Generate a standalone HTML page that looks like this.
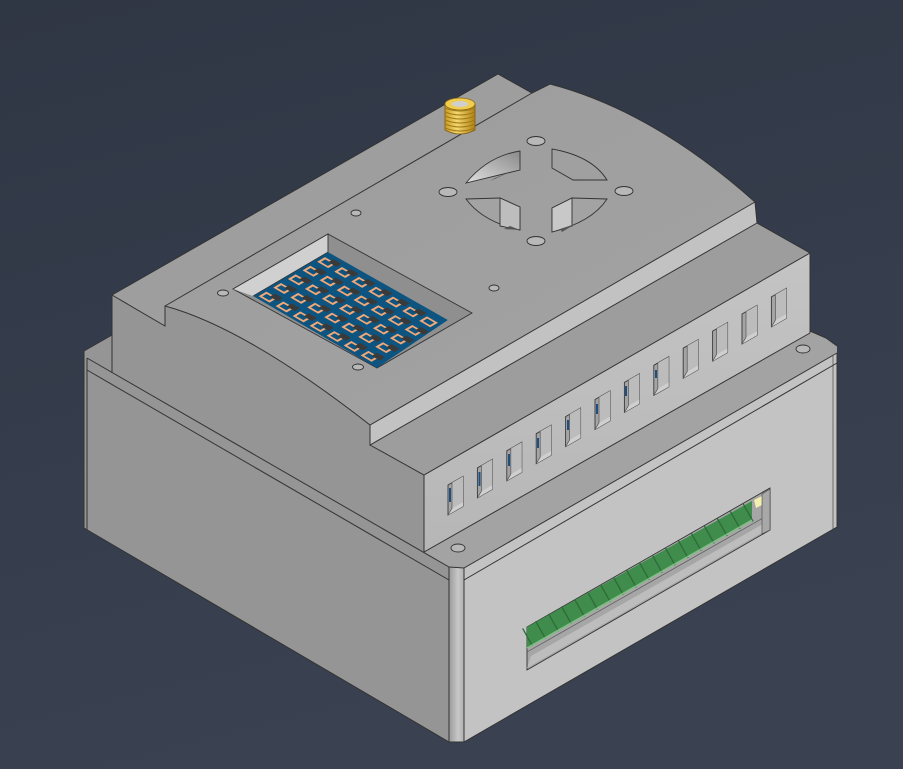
<!DOCTYPE html>
<html><head><meta charset="utf-8"><style>
html,body{margin:0;padding:0;width:903px;height:769px;overflow:hidden;background:#333a48}
svg{display:block}
</style></head><body>
<svg width="903" height="769" viewBox="0 0 903 769" xmlns="http://www.w3.org/2000/svg">
<defs>
<linearGradient id="bg" x1="0" y1="0" x2="0.3" y2="1">
<stop offset="0" stop-color="#2f3644"/><stop offset="1" stop-color="#3a4252"/></linearGradient>
<linearGradient id="band" x1="0" y1="0" x2="1" y2="0">
<stop offset="0" stop-color="#9a9a9a"/><stop offset="0.6" stop-color="#c8c8c8"/><stop offset="1" stop-color="#b0b0b0"/></linearGradient>
<linearGradient id="dome" x1="0" y1="0" x2="1" y2="1">
<stop offset="0" stop-color="#9c9c9c"/><stop offset="1" stop-color="#a3a3a3"/></linearGradient>
<linearGradient id="pet1" x1="0" y1="1" x2="1" y2="0">
<stop offset="0" stop-color="#e0e0e0"/><stop offset="1" stop-color="#8a8a8a"/></linearGradient>
<linearGradient id="gold" x1="0" y1="0" x2="1" y2="0">
<stop offset="0" stop-color="#c89a20"/><stop offset="0.4" stop-color="#f5d870"/><stop offset="1" stop-color="#b08010"/></linearGradient>
<linearGradient id="face2" x1="0" y1="0" x2="0" y2="1">
<stop offset="0" stop-color="#c4c4c4"/><stop offset="1" stop-color="#b6b6b6"/></linearGradient>
<g id="slot">
<path d="M0,0 L15,-8.6 L15,21.4 L0,30 Z" fill="#a4a4a4" stroke="#3a3a3a" stroke-width="0.9"/>
<path d="M4,-2.3 L15,-8.6 L15,17 L4,23.3 Z" fill="#bcbcbc"/>
<path d="M0,30 L4,23.3 L15,17 L15,21.4 Z" fill="#cfcfcf"/>
<path d="M4,-2.3 L4,23.3 L0,30" fill="none" stroke="#555" stroke-width="0.7"/>
</g>
<clipPath id="win"><path d="M253,296 L328,252 L448,320 L377,368 Z"/></clipPath>
</defs>
<rect width="903" height="769" fill="url(#bg)"/>

<!-- left face (whole) -->
<path d="M84,351 L112,335 L112,295 L165,306 Q246,328 370,425 L370,445 L424,475 L424,552 L449,567 L449,742 L84,528 Z" fill="#959595"/>
<!-- lower right face -->
<path d="M464,568 L837,353 L837,527 L464,742 Z" fill="#c3c3c3"/>
<rect x="449" y="567" width="15" height="175" fill="url(#band)"/>
<!-- right ledge top -->
<path d="M424,552 L810,331 L826,338 L837,346 L837,353 L464,568 L449,567 Z" fill="#a3a3a3"/>
<!-- upper right face -->
<path d="M424,475 L810,253 L810,333 L424,552 Z" fill="url(#face2)"/>
<!-- step top -->
<path d="M370,445 L757,223 L810,253 L424,475 Z" fill="#9d9d9d"/>
<!-- step front band -->
<path d="M370,425 L755,202 L757,223 L370,445 Z" fill="#c2c2c2"/>
<!-- dome top -->
<path d="M112,295 L498,74 L532,93 L550,84 Q653,111 755,202 L370,425 Q246,328 165,306 L165,326 Z" fill="url(#dome)"/>

<!-- edges -->
<g fill="none" stroke="#333" stroke-width="1">
<path d="M112,295 L498,74 L532,93 L550,84 Q653,111 755,202 L757,223 L810,253 L810,333"/>
<path d="M165,306 L532,93"/>
<path d="M112,295 L165,326 L165,306 Q246,328 370,425 L755,202"/>
<path d="M370,425 L370,445 L757,223"/>
<path d="M370,445 L424,475 L810,253"/>
<path d="M424,475 L424,552 L810,333"/>
<path d="M112,295 L112,373"/>
<path d="M84,351 L112,335"/>
<path d="M84,351 L84,528 L449,742 L464,742 L837,527 L837,353"/>
<path d="M87,358 L449,567 L464,568 L837,353"/>
<path d="M87,358 L87,530"/>
<path d="M87,370 L449,580"/>
<path d="M464,580 L837,363"/>
<path d="M449,567 L449,742 M464,568 L464,742"/>
<path d="M833,356 L833,529" stroke-width="0.6"/>
<path d="M810,331 L826,338 L837,346"/>
</g>

<!-- screw holes -->
<g stroke="#333" stroke-width="0.9" fill="#b8b8b8">
<ellipse cx="458" cy="548" rx="7" ry="4"/>
<ellipse cx="803" cy="349" rx="7" ry="4"/>
<ellipse cx="536" cy="141" rx="9" ry="4.5"/>
<ellipse cx="448" cy="192" rx="9" ry="4.5"/>
<ellipse cx="624" cy="191" rx="9" ry="4.5"/>
<ellipse cx="536" cy="241" rx="9" ry="4.5"/>
<ellipse cx="494" cy="288" rx="5" ry="3"/>
<ellipse cx="356" cy="213" rx="5" ry="3"/>
<ellipse cx="223" cy="293" rx="5.5" ry="3"/>
<ellipse cx="358" cy="367" rx="5.5" ry="3"/>
</g>

<!-- fan grill -->
<g stroke="#333" stroke-width="0.9">
<path d="M466,183 Q488,156 520,151 L520,170 Z" fill="url(#pet1)"/>
<path d="M552,149 Q592,156 607,180 L573,180 L552,168 Z" fill="#a0a0a0"/>
<path d="M466,199 L500,198 L520,207 L520,230 Q483,222 466,199 Z" fill="#a3a3a3"/>
<path d="M500,198 L520,207 L520,230 L500,226 Z" fill="#bdbdbd"/>
<path d="M607,199 L572,198 L552,208 L552,232 Q592,222 607,199 Z" fill="#a3a3a3"/>
<path d="M572,198 L552,208 L552,232 L572,226 Z" fill="#c8c8c8"/>
<path d="M510,226 L520,230 L504,229 Z" fill="#555" stroke="none"/>
<path d="M560,229 L575,224 L562,232 Z" fill="#555" stroke="none"/>
<path d="M495,178 L510,172 L490,181 Z" fill="#555" stroke="none"/>
</g>

<!-- PCB window -->
<path d="M233,289 L328,234 L472,313 L377,368 Z" fill="#8f8f8f" stroke="#333" stroke-width="0.9"/>
<path d="M233,289 L328,234 L328,252 L253,296 Z" fill="#d0d0d0"/>
<g clip-path="url(#win)">
<path d="M253,296 L328,252 L448,320 L377,368 Z" fill="#0d5580"/>
<g transform="matrix(1,0.58,0.862,-0.507,253,296)">
<g fill="none" stroke="#f0a878" stroke-width="2">
<rect x="4" y="4" width="9" height="7"/><rect x="21" y="4" width="9" height="7"/><rect x="38" y="4" width="9" height="7"/><rect x="55" y="4" width="9" height="7"/><rect x="72" y="4" width="9" height="7"/><rect x="89" y="4" width="9" height="7"/><rect x="106" y="4" width="9" height="7"/>
<rect x="4" y="21" width="9" height="7"/><rect x="21" y="21" width="9" height="7"/><rect x="38" y="21" width="9" height="7"/><rect x="55" y="21" width="9" height="7"/><rect x="72" y="21" width="9" height="7"/><rect x="89" y="21" width="9" height="7"/><rect x="106" y="21" width="9" height="7"/>
<rect x="4" y="38" width="9" height="7"/><rect x="21" y="38" width="9" height="7"/><rect x="38" y="38" width="9" height="7"/><rect x="55" y="38" width="9" height="7"/><rect x="72" y="38" width="9" height="7"/><rect x="89" y="38" width="9" height="7"/><rect x="106" y="38" width="9" height="7"/>
<rect x="4" y="55" width="9" height="7"/><rect x="21" y="55" width="9" height="7"/><rect x="38" y="55" width="9" height="7"/><rect x="55" y="55" width="9" height="7"/><rect x="72" y="55" width="9" height="7"/><rect x="89" y="55" width="9" height="7"/><rect x="106" y="55" width="9" height="7"/>
<rect x="4" y="72" width="9" height="7"/><rect x="21" y="72" width="9" height="7"/><rect x="38" y="72" width="9" height="7"/><rect x="55" y="72" width="9" height="7"/><rect x="72" y="72" width="9" height="7"/><rect x="89" y="72" width="9" height="7"/><rect x="106" y="72" width="9" height="7"/>
</g>
<g fill="#3a3a3a">
<rect x="9" y="9" width="8" height="6"/><rect x="26" y="9" width="8" height="6"/><rect x="43" y="9" width="8" height="6"/><rect x="60" y="9" width="8" height="6"/><rect x="77" y="9" width="8" height="6"/><rect x="94" y="9" width="8" height="6"/><rect x="111" y="9" width="8" height="6"/>
<rect x="9" y="26" width="8" height="6"/><rect x="26" y="26" width="8" height="6"/><rect x="43" y="26" width="8" height="6"/><rect x="60" y="26" width="8" height="6"/><rect x="77" y="26" width="8" height="6"/><rect x="94" y="26" width="8" height="6"/><rect x="111" y="26" width="8" height="6"/>
<rect x="9" y="43" width="8" height="6"/><rect x="26" y="43" width="8" height="6"/><rect x="43" y="43" width="8" height="6"/><rect x="60" y="43" width="8" height="6"/><rect x="77" y="43" width="8" height="6"/><rect x="94" y="43" width="8" height="6"/><rect x="111" y="43" width="8" height="6"/>
<rect x="9" y="60" width="8" height="6"/><rect x="26" y="60" width="8" height="6"/><rect x="43" y="60" width="8" height="6"/><rect x="60" y="60" width="8" height="6"/><rect x="77" y="60" width="8" height="6"/><rect x="94" y="60" width="8" height="6"/><rect x="111" y="60" width="8" height="6"/>
<rect x="9" y="77" width="8" height="6"/><rect x="26" y="77" width="8" height="6"/><rect x="43" y="77" width="8" height="6"/><rect x="60" y="77" width="8" height="6"/><rect x="77" y="77" width="8" height="6"/><rect x="94" y="77" width="8" height="6"/>
</g>
</g>
</g>
<path d="M253,296 L328,252" stroke="#333" stroke-width="0.7" fill="none"/>
<path d="M233,289 L328,234 L328,252" stroke="#333" stroke-width="0.9" fill="none"/>

<!-- antenna -->
<g>
<path d="M445,104 L445,130 Q460,138 475,130 L475,104 Z" fill="url(#gold)" stroke="#7a5a10" stroke-width="0.8"/>
<g stroke="#a07818" stroke-width="1" fill="none">
<path d="M445,108 Q460,114 475,108"/><path d="M445,112 Q460,118 475,112"/><path d="M445,116 Q460,122 475,116"/><path d="M445,120 Q460,126 475,120"/><path d="M445,124 Q460,130 475,124"/><path d="M445,128 Q460,134 475,128"/>
</g>
<ellipse cx="460" cy="104" rx="15" ry="6" fill="#f0cc50" stroke="#8a6a10" stroke-width="0.8"/>
<ellipse cx="460" cy="104" rx="8" ry="3" fill="#cfcfcf"/>
</g>

<!-- slots -->
<use href="#slot" transform="translate(448,485)"/>
<use href="#slot" transform="translate(477.4,467.9)"/>
<use href="#slot" transform="translate(506.8,450.8)"/>
<use href="#slot" transform="translate(536.2,433.7)"/>
<use href="#slot" transform="translate(565.6,416.6)"/>
<use href="#slot" transform="translate(595,399.5)"/>
<use href="#slot" transform="translate(624.4,382.4)"/>
<use href="#slot" transform="translate(653.8,365.3)"/>
<use href="#slot" transform="translate(683.2,348.2)"/>
<use href="#slot" transform="translate(712.6,331.1)"/>
<use href="#slot" transform="translate(742,314)"/>
<use href="#slot" transform="translate(771.4,296.9)"/>
<g fill="#1f4f80">
<rect x="449" y="488" width="2" height="14"/><rect x="478.5" y="472" width="2" height="14"/><rect x="508" y="454" width="2" height="12"/><rect x="537" y="438" width="2" height="10"/><rect x="567" y="420" width="2" height="10"/><rect x="596" y="404" width="2" height="10"/><rect x="625" y="386" width="2" height="10"/><rect x="655" y="370" width="2" height="8"/>
</g>

<!-- terminal window -->
<path d="M527,627 L770,488 L770,530 L527,670 Z" fill="#a6a6a6" stroke="#333" stroke-width="0.9"/>
<path d="M531,656 L770,520 L770,528 L527,668 Z" fill="#bdbdbd"/>
<path d="M527,627 L752,501 L752,520 L527,648 Z" fill="#3f8c4c"/>
<line x1="527" y1="637.5" x2="752" y2="510.5" stroke="#2e6b39" stroke-width="20" stroke-dasharray="1.3 13.6"/>
<path d="M527,648 L752,520" stroke="#7cc080" stroke-width="1.5" fill="none"/>
<path d="M527,652 L770,514" stroke="#555" stroke-width="0.7" fill="none"/>
<path d="M754,500 L764,495 L764,504 L756,508 Z" fill="#f4f0b0"/>
<path d="M762,494 L770,489 L770,530 L762,534 Z" fill="#a8a8a8" stroke="#444" stroke-width="0.6"/>
</svg>
</body></html>
